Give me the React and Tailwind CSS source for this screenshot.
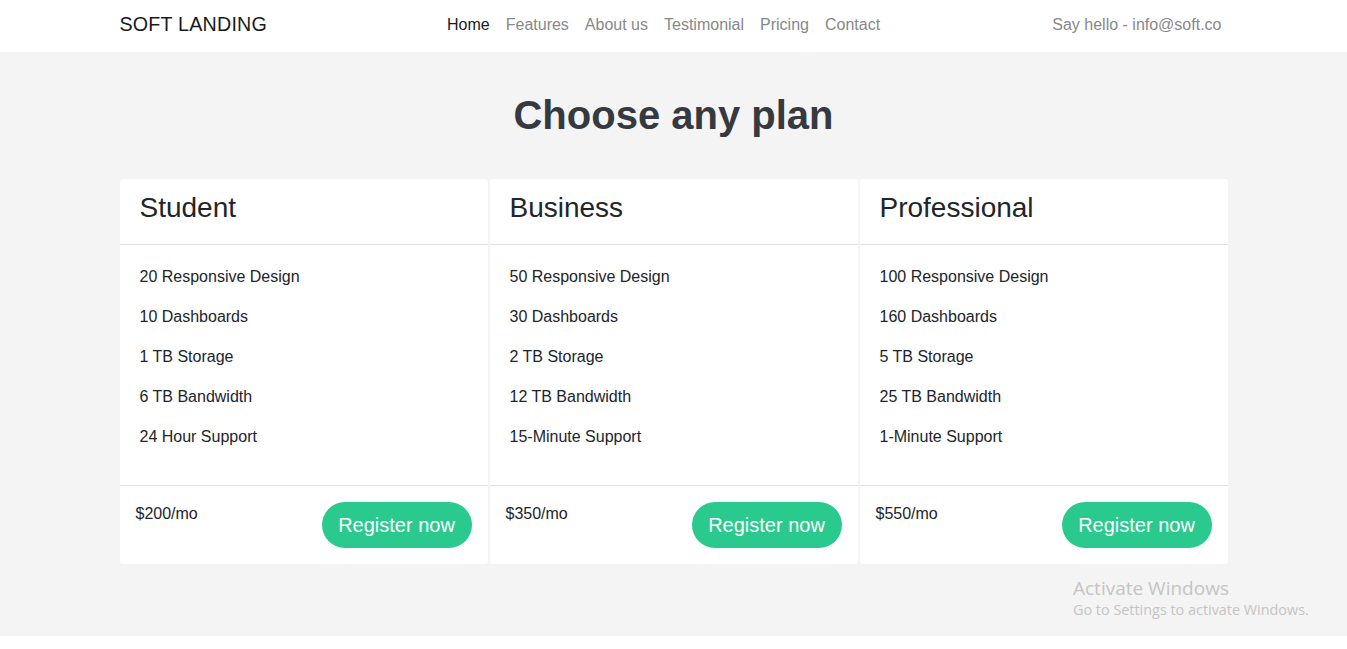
const NAV = ["Home", "Features", "About us", "Testimonial", "Pricing", "Contact"];

const PLANS = [
  {
    name: "Student",
    price: "$200/mo",
    features: ["20 Responsive Design", "10 Dashboards", "1 TB Storage", "6 TB Bandwidth", "24 Hour Support"],
  },
  {
    name: "Business",
    price: "$350/mo",
    features: ["50 Responsive Design", "30 Dashboards", "2 TB Storage", "12 TB Bandwidth", "15-Minute Support"],
  },
  {
    name: "Professional",
    price: "$550/mo",
    features: ["100 Responsive Design", "160 Dashboards", "5 TB Storage", "25 TB Bandwidth", "1-Minute Support"],
  },
];

function PlanCard({ plan }) {
  return (
    <div className="bg-white rounded-[3px] flex flex-col">
      <div className="h-[66px] border-b border-[#e2e2e2] px-5 pt-[14px]">
        <h3 className="text-[28px] text-[#212529] leading-[30px]">{plan.name}</h3>
      </div>
      <ul className="h-[241px] pt-[20px] px-5 border-b border-[#e2e2e2]">
        {plan.features.map((f) => (
          <li key={f} className="text-base leading-6 mb-4 text-[#212529]">
            {f}
          </li>
        ))}
      </ul>
      <div className="h-[78px] flex justify-between items-start px-4 pt-[16px]">
        <span className="text-base leading-6 text-[#212529]">{plan.price}</span>
        <button className="w-[150px] h-[46px] rounded-full bg-[#2ac98d] text-white text-xl">
          Register now
        </button>
      </div>
    </div>
  );
}

export default function App() {
  return (
    <div className="font-['Liberation_Sans',Arial,sans-serif] bg-white min-h-[649px] relative">
      {/* top bar */}
      <header className="h-[52px] bg-white">
        <div className="w-[1108px] mx-auto h-full flex items-center pb-[3px]">
          <span className="text-[19.7px] text-[#1a1a1a] tracking-[0.2px]">SOFT LANDING</span>
          <nav className="flex gap-4 ml-[180px] text-base">
            {NAV.map((n, i) => (
              <a key={n} href="#" className={i === 0 ? "text-[#1a1a1a]" : "text-[#888888]"}>
                {n}
              </a>
            ))}
          </nav>
          <span className="ml-auto pr-[6px] text-base text-[#888888]">Say hello - info@soft.co</span>
        </div>
      </header>

      {/* pricing */}
      <section className="bg-[#f4f4f4] h-[584px] pt-[40px]">
        <h2 className="text-center text-[40px] font-bold text-[#343a40] leading-[46px]">Choose any plan</h2>
        <div className="w-[1108px] mx-auto mt-[41px] grid grid-cols-3 gap-[2px]">
          {PLANS.map((p) => (
            <PlanCard key={p.name} plan={p} />
          ))}
        </div>
      </section>

      {/* windows watermark */}
      <div className="absolute left-[1073px] top-[576px] font-['Open_Sans',sans-serif] text-[#c4c4c4] pointer-events-none">
        <div className="text-[19px] leading-[24px]">Activate Windows</div>
        <div className="text-[14.4px] leading-[20px]">Go to Settings to activate Windows.</div>
      </div>
    </div>
  );
}
